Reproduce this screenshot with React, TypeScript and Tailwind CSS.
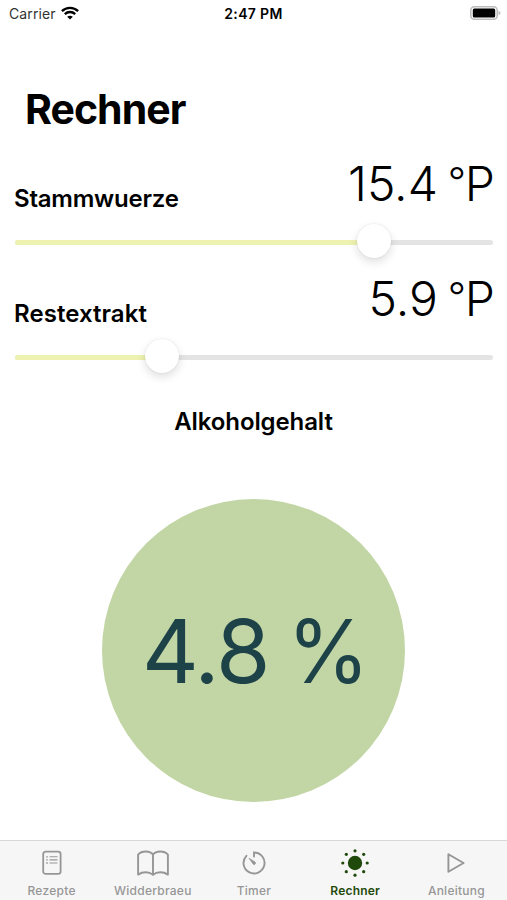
import React from "react";

type SliderRowProps = { label: string; labelClass: string; value: string; percent: number };

function SliderRow({ label, labelClass, value, percent }: SliderRowProps) {
  return (
    <section className="h-[115px] px-[14px]">
      <div className="-mr-[2px] flex h-[60px] items-start justify-between whitespace-nowrap">
        <h2 className={labelClass}>{label}</h2>
        <span className="text-[48px] leading-[60px] font-light">
          {value}
          <span className="ml-[10px] align-[5px] text-[40px] leading-none tracking-[-1.2px]">°</span>P
        </span>
      </div>
      <div className="relative mt-[11px] ml-[1px] h-[35px]">
        <div className="flex h-full items-center">
          <div className="h-[5px] w-full overflow-hidden rounded-full bg-[#e4e4e4]">
            <div className="h-full bg-[#edf2b0]" style={{ width: `${percent}%` }} />
          </div>
        </div>
        <div
          className="absolute -top-[1px] size-[34px] -translate-x-1/2 rounded-full bg-white shadow-[0_4px_10px_rgba(0,0,0,0.13),0_0_2px_rgba(0,0,0,0.1)]"
          style={{ left: `${percent}%` }}
        />
      </div>
    </section>
  );
}

function RecipeIcon() {
  return (
    <svg width="20" height="26" viewBox="0 0 20 26" fill="none" stroke="currentColor">
      <rect x="1.2" y="1.7" width="17.4" height="22.2" rx="2.4" strokeWidth="1.8" />
      <path d="M7.5 6.8h8M7.5 9.9h8M7.5 13h8" strokeWidth="1.1" />
      <path d="M4.2 6.8h1.6M4.2 9.9h1.6M4.2 13h1.6" strokeWidth="1.3" />
    </svg>
  );
}

function BookIcon() {
  return (
    <svg width="32" height="27" viewBox="0 0 32 27" fill="none" stroke="currentColor" strokeWidth="1.9" strokeLinejoin="round">
      <path d="M16 4.6C14.6 2.6 11.8 1.5 8.9 1.5C5.4 1.5 2.5 2.9 1.1 4.6V24.6C3.2 23.2 5.9 22.3 8.7 22.3C11.6 22.3 14.2 23.3 16 24.9C17.8 23.3 20.4 22.3 23.3 22.3C26.1 22.3 28.8 23.2 30.9 24.6V4.6C29.5 2.9 26.6 1.5 23.1 1.5C20.2 1.5 17.4 2.6 16 4.6V24.9" />
    </svg>
  );
}

function TimerIcon() {
  return (
    <svg width="24" height="24" viewBox="0 0 24 24" fill="none" stroke="currentColor" strokeWidth="1.9" strokeLinecap="round">
      <path d="M12 5.6V1.5A10.5 10.5 0 1 1 4.4 4.8" />
      <path d="M7.2 7.5L11.1 13.1A1.35 1.35 0 0 0 13.1 11.1Z" fill="currentColor" strokeWidth=".7" strokeLinejoin="round" />
    </svg>
  );
}

function SunIcon() {
  return (
    <svg width="28" height="28" viewBox="0 0 28 28" fill="currentColor">
      <circle cx="14" cy="14" r="7.2" />
      <circle cx="14" cy="1.8" r="1.6" />
      <circle cx="22.7" cy="5.3" r="1.6" />
      <circle cx="26.2" cy="14" r="1.6" />
      <circle cx="22.7" cy="22.7" r="1.6" />
      <circle cx="14" cy="26.2" r="1.6" />
      <circle cx="5.3" cy="22.7" r="1.6" />
      <circle cx="1.8" cy="14" r="1.6" />
      <circle cx="5.3" cy="5.3" r="1.6" />
    </svg>
  );
}

function PlayIcon() {
  return (
    <svg width="18" height="20" viewBox="0 0 18 20" fill="none" stroke="currentColor" strokeWidth="1.9" strokeLinejoin="round">
      <path d="M1.4 1.3L16.6 10L1.4 18.7Z" />
    </svg>
  );
}

const tabs = [
  { label: "Rezepte", Icon: RecipeIcon, active: false },
  { label: "Widderbraeu", Icon: BookIcon, active: false },
  { label: "Timer", Icon: TimerIcon, active: false },
  { label: "Rechner", Icon: SunIcon, active: true },
  { label: "Anleitung", Icon: PlayIcon, active: false },
];

export default function App() {
  return (
    <div className="flex h-[900px] w-[507px] flex-col overflow-hidden bg-white font-['Inter',sans-serif] text-black">
      <header className="grid h-[27px] grid-cols-3 items-center px-[9px] text-[14px] leading-[27px]">
        <div className="flex items-center gap-[5px] text-[#333]">
          <span className="tracking-[0.1px]">Carrier</span>
          <svg className="-mt-[2px]" width="18" height="14" viewBox="0 0 18 14" fill="none" stroke="#000" strokeWidth="2.3">
            <path d="M.9 5.1C5.4.7 12.6.7 17.1 5.1" />
            <path d="M3.8 8.1C6.7 5.3 11.3 5.3 14.2 8.1" />
            <path d="M9 13.6L6.2 10.7C7.7 9.3 10.3 9.3 11.8 10.7Z" fill="#000" stroke="none" />
          </svg>
        </div>
        <span className="text-center font-semibold tracking-[0.35px]">2:47 PM</span>
        <svg className="-mt-[1px] -mr-[3px] justify-self-end" width="31" height="14" viewBox="0 0 31 14">
          <rect x=".8" y=".8" width="26.4" height="12.4" rx="3.5" fill="#fff" stroke="#bdbdbd" strokeWidth="1.6" />
          <rect x="2.8" y="2.6" width="22.4" height="8.8" rx="1.5" fill="#000" />
          <path d="M28.5 4.8Q30.6 5.5 30.6 7T28.5 9.2Z" fill="#bdbdbd" />
        </svg>
      </header>
      <main className="flex flex-1 flex-col">
        <h1 className="mt-[57px] h-[50px] pl-[25px] text-[41px] leading-[50px] font-bold tracking-[-0.95px]">Rechner</h1>
        <div className="mt-[20px]">
          <SliderRow
            label="Stammwuerze"
            labelClass="pt-[30px] text-[24px] leading-[30px] font-semibold tracking-[-0.22px]"
            value="15.4"
            percent={75.1}
          />
          <SliderRow
            label="Restextrakt"
            labelClass="pt-[30px] text-[24px] leading-[30px] font-semibold tracking-[0.05px]"
            value="5.9"
            percent={30.7}
          />
        </div>
        <h2 className="mt-[23px] text-center text-[24px] leading-[30px] font-semibold tracking-[-0.1px]">Alkoholgehalt</h2>
        <div className="mt-[62px] flex size-[303px] items-center justify-center self-center rounded-full bg-[#c2d6a5] pl-[3px] whitespace-nowrap">
          <span className="text-[88px] leading-[100px] tracking-[-1.6px] text-[#1d4247] [word-spacing:-9px]">
            4.8 <span className="inline-block origin-right scale-x-95">%</span>
          </span>
        </div>
      </main>
      <nav className="grid h-[60px] grid-cols-5 border-t border-[#d8d8d8] bg-[#f6f6f6] pl-[1px]">
        {tabs.map(({ label, Icon, active }) => (
          <div key={label} className={active ? "flex flex-col items-center text-[#1f4a0c]" : "flex flex-col items-center text-[#969696]"}>
            <div className="flex h-[44px] items-center">
              <Icon />
            </div>
            <span className={active ? "-mt-[1px] text-[12px] leading-[14px] font-semibold tracking-[0.2px]" : "-mt-[1px] text-[12px] leading-[14px] font-medium tracking-[0.25px]"}>{label}</span>
          </div>
        ))}
      </nav>
    </div>
  );
}
